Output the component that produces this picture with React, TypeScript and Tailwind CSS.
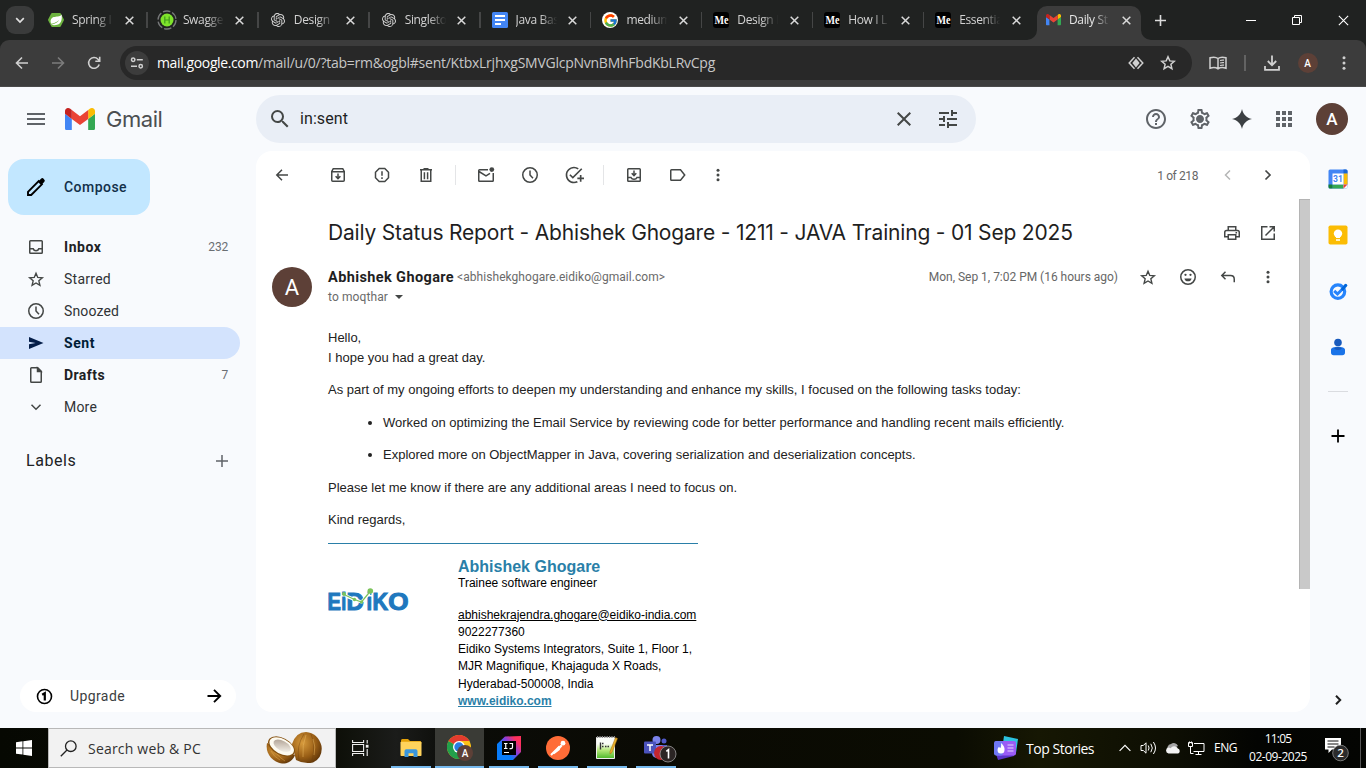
import React from 'react';
import {
  MdAddTask,
  MdApps,
  MdClose,
  MdHelpOutline,
  MdMenu,
  MdOutlineSettings,
  MdSearch,
  MdTune,
} from 'react-icons/md';
import { FcGoogle } from 'react-icons/fc';

type IconProps = { children: React.ReactNode; size?: number; className?: string; box?: string; sw?: number };

function Stroke({ children, size = 20, className = '', box = '0 0 20 20', sw = 1.5 }: IconProps) {
  return (
    <svg
      width={size}
      height={size}
      viewBox={box}
      fill="none"
      stroke="currentColor"
      strokeWidth={sw}
      className={`shrink-0 ${className}`}
    >
      {children}
    </svg>
  );
}

function GmailMark({ className }: { className: string }) {
  return (
    <svg viewBox="52 42 88 66" className={className}>
      <path fill="#4285f4" d="M58 108h14V74L52 59v43c0 3.32 2.69 6 6 6" />
      <path fill="#34a853" d="M120 108h14c3.32 0 6-2.69 6-6V59l-20 15" />
      <path fill="#fbbc04" d="M120 48v26l20-15v-8c0-7.42-8.47-11.65-14.4-7.2" />
      <path fill="#ea4335" d="M72 74V48l24 18 24-18v26L96 92" />
      <path fill="#c5221f" d="M52 51v8l20 15V48l-5.6-4.2c-5.94-4.45-14.4-.22-14.4 7.2" />
    </svg>
  );
}

function OpenAiMark() {
  return (
    <svg width="14" height="14" viewBox="0 0 24 24" fill="#d6d6d6">
      <path d="M22.2819 9.8211a5.9847 5.9847 0 0 0-.5157-4.9108 6.0462 6.0462 0 0 0-6.5098-2.9A6.0651 6.0651 0 0 0 4.9807 4.1818a5.9847 5.9847 0 0 0-3.9977 2.9 6.0462 6.0462 0 0 0 .7427 7.0966 5.98 5.98 0 0 0 .511 4.9107 6.051 6.051 0 0 0 6.5146 2.9001A5.9847 5.9847 0 0 0 13.2599 24a6.0557 6.0557 0 0 0 5.7718-4.2058 5.9894 5.9894 0 0 0 3.9977-2.9001 6.0557 6.0557 0 0 0-.7475-7.0729zm-9.022 12.6081a4.4755 4.4755 0 0 1-2.8764-1.0408l.1419-.0804 4.7783-2.7582a.7948.7948 0 0 0 .3927-.6813v-6.7369l2.02 1.1686a.071.071 0 0 1 .038.052v5.5826a4.504 4.504 0 0 1-4.4945 4.4944zm-9.6607-4.1254a4.4708 4.4708 0 0 1-.5346-3.0137l.142.0852 4.783 2.7582a.7712.7712 0 0 0 .7806 0l5.8428-3.3685v2.3324a.0804.0804 0 0 1-.0332.0615L9.74 19.9502a4.4992 4.4992 0 0 1-6.1408-1.6464zM2.3408 7.8956a4.485 4.485 0 0 1 2.3655-1.9728V11.6a.7664.7664 0 0 0 .3879.6765l5.8144 3.3543-2.0201 1.1685a.0757.0757 0 0 1-.071 0l-4.8303-2.7865A4.504 4.504 0 0 1 2.3408 7.872zm16.5963 3.8558L13.1038 8.364 15.1192 7.2a.0757.0757 0 0 1 .071 0l4.8303 2.7913a4.4944 4.4944 0 0 1-.6765 8.1042v-5.6772a.79.79 0 0 0-.407-.667zm2.0107-3.0231l-.142-.0852-4.7735-2.7818a.7759.7759 0 0 0-.7854 0L9.409 9.2297V6.8974a.0662.0662 0 0 1 .0284-.0615l4.8303-2.7866a4.4992 4.4992 0 0 1 6.6802 4.66zM8.3065 12.863l-2.02-1.1638a.0804.0804 0 0 1-.038-.0567V6.0742a4.4992 4.4992 0 0 1 7.3757-3.4537l-.142.0805L8.704 5.459a.7948.7948 0 0 0-.3927.6813zm1.0976-2.3654l2.602-1.4998 2.6069 1.4998v2.9994l-2.5974 1.4997-2.6067-1.4997Z" />
    </svg>
  );
}

function SpringMark() {
  return (
    <svg width="16" height="16" viewBox="0 0 16 16">
      <path fill="#6db33f" d="M4.2 1h7.6q.7 0 1 .6l3 5.6q.3.7 0 1.4l-3 5.6q-.3.7-1 .7H4.200q-.7 0-1-.7l-3-5.6q-.3-.7 0-1.4l3-5.6q.3-.6 1-.6z" />
      <path fill="#fff" d="M13.6 2.4C14.3 7 13.4 11 10 12.500c-2.500 1-5 .8-7 .3 3.500-.6 6.800-2.200 8.300-5C9.400 10 6.700 11.200 3.300 11.700 1.900 9.500 2.600 6.300 5.600 5.100 8.400 4 11.600 5.200 13.600 2.400z" />
    </svg>
  );
}

function SwaggerMark() {
  return (
    <svg width="20" height="20" viewBox="0 0 20 20">
      <circle cx="10" cy="10" r="9" fill="none" stroke="#77797a" strokeWidth="1.3" strokeDasharray="7.5 2" />
      <circle cx="10" cy="10" r="6.5" fill="#7fe42c" />
      <path d="M7.800 6.500v7M12.200 6.500v7M7.800 10h4.400" stroke="#3f9a1c" strokeWidth="1.2" fill="none" />
    </svg>
  );
}

function DocsMark() {
  return (
    <svg width="16" height="16" viewBox="0 0 16 16">
      <rect width="16" height="16" rx="1.5" fill="#4285f4" />
      <path d="M3 4h10M3 8h10M3 12h6" stroke="#fff" strokeWidth="1.8" />
    </svg>
  );
}

function GoogleMark() {
  return (
    <span className="flex size-4 items-center justify-center rounded-full bg-white">
      <FcGoogle size={15} />
    </span>
  );
}

function MediumMark() {
  return (
    <span className="flex h-4 w-4 items-center rounded-[3px] bg-black pl-px">
      <svg width="15" height="16" viewBox="0 0 15 16" fill="#fff">
        <text x="0.5" y="12" textLength="14" lengthAdjust="spacingAndGlyphs" fontFamily="Liberation Serif" fontWeight="700" fontSize="12">
          Me
        </text>
      </svg>
    </span>
  );
}

function Cross({ size = 9, className = '', sw = 1.5 }: { size?: number; className?: string; sw?: number }) {
  return (
    <Stroke size={size} box="0 0 9 9" sw={sw} className={className}>
      <path d="M.7.7l7.600 7.600M8.300.7L.7 8.300" />
    </Stroke>
  );
}

const tabs = [
  { label: 'Spring I', icon: <SpringMark /> },
  { label: 'Swagge', icon: <SwaggerMark /> },
  { label: 'Design', icon: <OpenAiMark /> },
  { label: 'Singleto', icon: <OpenAiMark /> },
  { label: 'Java Bas', icon: <DocsMark /> },
  { label: 'medium', icon: <GoogleMark /> },
  { label: 'Design I', icon: <MediumMark /> },
  { label: 'How I L', icon: <MediumMark /> },
  { label: 'Essentia', icon: <MediumMark /> },
];

function TabBody({ label, icon, light = false }: { label: string; icon: React.ReactNode; light?: boolean }) {
  return (
    <>
      <span className="flex w-5 shrink-0 items-center justify-center">{icon}</span>
      <span
        className={`ml-[6px] w-[48px] shrink-0 text-[12px] tracking-[-0.35px] whitespace-nowrap [mask-image:linear-gradient(to_right,black_50%,transparent_86%)] ${
          light ? 'text-[#e6e6e6]' : 'text-[#d2d2d2]'
        }`}
      >
        {label}
      </span>
      <Cross size={9} className="ml-[4.5px] text-[#dadada]" />
    </>
  );
}

function TabStrip() {
  return (
    <div className="flex h-10 shrink-0 bg-[#202221] font-['Open_Sans',sans-serif]">
      <div className="flex w-[37px] shrink-0 items-center pl-[6px]">
        <div className="flex size-7 items-center justify-center rounded-[9px] bg-[#3a3b3b] text-[#e0e0e0]">
          <Stroke size={10} box="0 0 10 10" sw={1.7}>
            <path d="M1.200 3.200L5 7l3.800-3.800" />
          </Stroke>
        </div>
      </div>
      {tabs.map((tab, i) => (
        <div key={i} className="flex w-[110.9px] shrink-0 items-center pl-[9px]">
          <TabBody label={tab.label} icon={tab.icon} />
          {i < tabs.length - 1 && <span className="ml-auto h-4 w-[1.5px] bg-[#454646]" />}
        </div>
      ))}
      <div className="flex w-[107px] shrink-0 items-end pl-[2px]">
        <div className="relative flex h-[34px] w-[104px] items-center rounded-t-[10px] bg-[#3c3c3c] pb-[6px] pl-[6px]">
          <TabBody label="Daily St" light icon={<GmailMark className="w-[15px]" />} />
          <svg className="absolute bottom-0 -left-[10px]" width="10" height="10" fill="#3c3c3c">
            <path d="M10 0v10H0A10 10 0 0 0 10 0z" />
          </svg>
          <svg className="absolute -right-[10px] bottom-0" width="10" height="10" fill="#3c3c3c">
            <path d="M0 0v10h10A10 10 0 0 1 0 0z" />
          </svg>
        </div>
      </div>
      <div className="flex flex-1 items-center pl-[13px] text-white">
        <Stroke size={11} box="0 0 11 11" sw={1.6} className="text-[#dcdcdc]">
          <path d="M5.500 0v11M0 5.500h11" />
        </Stroke>
        <Stroke size={10} box="0 0 10 10" sw={1} className="ml-[80px]">
          <path d="M0 5.500h10" />
        </Stroke>
        <Stroke size={10} box="0 0 10 10" sw={1} className="ml-9">
          <path d="M.5 2.500h7v7h-7zM2.500 2.500v-2h7v7h-2" />
        </Stroke>
        <Cross size={11} sw={0.9} className="ml-9" />
      </div>
    </div>
  );
}

function AddressBar() {
  return (
    <div className="flex h-[47px] shrink-0 bg-[#202221]">
      <div className="flex flex-1 items-center rounded-t-[9px] border-b border-[#4a4a4a] bg-[#3c3c3c] text-[#d0d0d0]">
        <Stroke size={14} box="0 0 14 14" sw={1.6} className="ml-[15px]">
          <path d="M13 7H2M7 1.500L1.500 7 7 12.500" />
        </Stroke>
        <Stroke size={14} box="0 0 14 14" sw={1.6} className="ml-[22px] text-[#7c7c7c]">
          <path d="M1 7h11M7 1.500L12.500 7 7 12.500" />
        </Stroke>
        <Stroke size={14} box="0 0 14 14" sw={1.6} className="ml-[22px]">
          <path d="M12.200 8.500A5.400 5.400 0 1 1 11 3.200l1.500 1.500M12.700.8v4.400H8.300" />
        </Stroke>
        <div className="ml-[19px] flex h-[34px] w-[1072px] items-center rounded-full bg-[#282828]">
          <div className="ml-[5px] flex size-6 items-center justify-center rounded-full bg-[#3c3c3c]">
            <Stroke size={14} box="0 0 14 14" sw={1.5}>
              <circle cx="3.200" cy="3.800" r="1.700" />
              <path d="M6.800 3.800h6M1 10.200h6" />
              <circle cx="10.700" cy="10.200" r="1.700" />
            </Stroke>
          </div>
          <div className="ml-[8px] font-['Open_Sans',sans-serif] text-[14px] leading-5 whitespace-nowrap text-[#c7c7c7]">
            <span className="tracking-[-0.38px] text-white">mail.google.com</span>
            <span className="tracking-[-0.25px]">/mail/u/0/?tab=rm&amp;ogbl#sent/KtbxLrjhxgSMVGlcpNvnBMhFbdKbLRvCpg</span>
          </div>
          <svg width="16" height="14" viewBox="0 0 16 14" className="ml-auto text-[#cfcfcf]" fill="none" stroke="currentColor" strokeWidth="1.5">
            <path d="M6.500 1.200L1.200 7l5.300 5.800M9.500 1.200L14.800 7l-5.300 5.800" />
            <path d="M8 2.600L11.600 7 8 11.400 4.400 7z" fill="currentColor" stroke="none" />
          </svg>
          <Stroke size={16} box="0 0 16 16" sw={1.5} className="mr-[16px] ml-[16px]">
            <path d="M8 1.800l1.800 4.100 4.500.4-3.400 3 1 4.300L8 11.300l-3.900 2.300 1-4.300-3.400-3 4.500-.4z" />
          </Stroke>
        </div>
        <Stroke size={18} box="0 0 18 18" sw={1.5} className="ml-[17px]">
          <path d="M9 4.500C7 3 3.500 3 1 3.800v10.400c2.500-.8 6-.8 8 .6 2-1.400 5.500-1.400 8-.6V3.800C14.500 3 11 3 9 4.500zv10" />
          <path d="M11 6.500q2-.6 4-.3M11 9q2-.6 4-.3M11 11.500q2-.6 4-.3" strokeWidth="1.2" />
        </Stroke>
        <span className="ml-[17px] h-4 w-[1.5px] bg-[#636363]" />
        <Stroke size={16} box="0 0 16 16" sw={1.8} className="ml-[18px]">
          <path d="M8 .5v9.500M3.800 6L8 10.200 12.200 6M1 11v3.800h14V11" />
        </Stroke>
        <span className="ml-[18px] flex size-5 items-center justify-center rounded-full bg-[#5d4037] font-['Roboto',sans-serif] text-[10px] font-medium text-white">
          A
        </span>
        <svg width="4" height="14" viewBox="0 0 4 14" fill="#d0d0d0" className="ml-[24px]">
          <circle cx="2" cy="1.8" r="1.5" />
          <circle cx="2" cy="7" r="1.5" />
          <circle cx="2" cy="12.2" r="1.5" />
        </svg>
      </div>
    </div>
  );
}

function Dots({ className = '' }: { className?: string }) {
  return (
    <svg width="20" height="20" viewBox="0 0 20 20" fill="currentColor" className={className}>
      <circle cx="10" cy="5.2" r="1.5" />
      <circle cx="10" cy="10" r="1.5" />
      <circle cx="10" cy="14.8" r="1.5" />
    </svg>
  );
}

const clock = (
  <Stroke>
    <circle cx="10" cy="10" r="7.25" />
    <path d="M10 5.500V10l3 3.200" />
  </Stroke>
);

const star = (
  <Stroke sw={1.4}>
    <path d="M10 4.300l1.750 4.100 4.600.4-3.500 3 1.060 4.500L10 13.950l-3.910 2.350 1.060-4.500-3.500-3 4.600-.4z" />
  </Stroke>
);

const folders = [
  {
    label: 'Inbox',
    count: '232',
    style: 'font-bold tracking-[0.56px]',
    icon: (
      <Stroke>
        <rect x="3.75" y="3.75" width="12.5" height="12.5" rx="0.8" />
        <path d="M4 11.750h3.200c.4 1.300 1.500 2 2.800 2s2.400-.7 2.800-2H16" />
      </Stroke>
    ),
  },
  { label: 'Starred', style: 'tracking-[0.26px] text-[#303235]', icon: star },
  { label: 'Snoozed', style: 'tracking-[0.13px] text-[#303235]', icon: clock },
  {
    label: 'Sent',
    style: 'font-bold tracking-[0.56px] text-[#001d35]',
    active: true,
    icon: (
      <svg width="20" height="20" viewBox="0 0 20 20" fill="#041e49">
        <path d="M3 4l14.500 6L3 16v-4.700L9.500 10 3 8.700z" />
      </svg>
    ),
  },
  {
    label: 'Drafts',
    count: '7',
    style: 'font-bold tracking-[0.43px]',
    icon: (
      <Stroke>
        <path d="M4.750 3.500a.75.75 0 0 1 .75-.75h6.200l3.550 3.550v10.200a.75.75 0 0 1-.75.75h-9a.75.75 0 0 1-.75-.75z" />
        <path d="M11.500 3v3.500H15z" fill="currentColor" />
      </Stroke>
    ),
  },
  {
    label: 'More',
    style: 'tracking-[0.19px] text-[#303235]',
    icon: (
      <Stroke>
        <path d="M5.500 7.800l4.500 4.500 4.500-4.500" />
      </Stroke>
    ),
  },
];

function Sidebar() {
  return (
    <div className="flex w-64 shrink-0 flex-col pt-2 pb-4 text-[#202124]">
      <button className="ml-2 flex h-14 w-[142px] items-center rounded-2xl bg-[#c2e7ff] pl-[18px] text-[14px] font-medium tracking-[0.46px] text-[#12304a]">
        <svg width="20" height="20" viewBox="0 0 20 20">
          <path fill="none" stroke="#000" strokeWidth="1.9" d="M2 18v-3.200L12.700 4.100l3.200 3.200L5.200 18z" />
          <path d="M12 4.800l3-3a1.800 1.800 0 0 1 2.600 0l.6.600a1.800 1.800 0 0 1 0 2.600l-3 3z" />
        </svg>
        <span className="ml-[18px]">Compose</span>
      </button>
      <nav className="mt-4 flex flex-col">
        {folders.map((f) => (
          <div
            key={f.label}
            className={`flex h-8 w-60 items-center rounded-r-full pr-3 pl-[26px] text-[14px] ${f.active ? 'bg-[#d3e3fd]' : ''}`}
          >
            <span className="text-[#444746]">{f.icon}</span>
            <span className={`ml-[18px] ${f.style}`}>{f.label}</span>
            <span className="ml-auto text-[12px] tracking-[-0.2px] text-[#6a6e73]">{f.count}</span>
          </div>
        ))}
      </nav>
      <div className="mt-[10px] flex h-14 w-60 items-center justify-between pr-[11px] pl-[26px] text-[16px]">
        <span className="tracking-[0.55px]">Labels</span>
        <Stroke size={14} box="0 0 14 14" sw={1.5} className="text-[#5f6368]">
          <path d="M7 1v12M1 7h12" />
        </Stroke>
      </div>
      <div className="mt-auto ml-5 flex h-8 w-[216px] items-center rounded-full bg-white pr-[14px] pl-4 text-[14px] tracking-[0.4px] text-[#3c3e41]">
        <Stroke size={17} box="0 0 17 17" sw={1.6} className="text-black">
          <circle cx="8.5" cy="8.5" r="7" />
          <path d="M6.200 6.800l2.600-1.600v7.300" strokeWidth="2.2" />
        </Stroke>
        <span className="ml-[17px]">Upgrade</span>
        <Stroke size={16} box="0 0 16 16" sw={1.9} className="ml-auto text-black">
          <path d="M1.500 8h12.500M8 1.800L14.200 8 8 14.200" />
        </Stroke>
      </div>
    </div>
  );
}

function GmailHeader() {
  return (
    <div className="flex h-16 shrink-0 items-center text-[#5f6368]">
      <div className="flex w-64 shrink-0 items-center pl-6">
        <MdMenu size={24} />
        <GmailMark className="ml-[17px] w-[30px]" />
        <span className="ml-[11px] font-['Inter',sans-serif] text-[22px] leading-8 tracking-[-0.45px] text-[#4c4f51]">Gmail</span>
      </div>
      <div className="flex h-12 w-[720px] shrink-0 items-center rounded-full bg-[#e9eef6] pr-4 pl-3 text-[#444746]">
        <MdSearch size={24} />
        <span className="ml-2 text-[16px] tracking-[0.08px] text-[#1f1f1f]">in:sent</span>
        <MdClose size={24} className="ml-auto" />
        <MdTune size={24} className="ml-5" />
      </div>
      <div className="ml-auto flex items-center pr-[18px]">
        <MdHelpOutline size={24} />
        <svg width="24" height="24" viewBox="0 0 24 24" className="ml-5">
          <MdOutlineSettings size={24} />
          <circle cx="12" cy="12" r="3" fill="currentColor" />
        </svg>
        <svg width="20" height="20" viewBox="0 0 20 20" fill="#3c4043" className="ml-5">
          <path d="M10 0C11.200 5.500 14.500 8.800 20 10 14.500 11.200 11.200 14.500 10 20 8.800 14.500 5.500 11.200 0 10 5.500 8.800 8.800 5.500 10 0z" />
        </svg>
        <MdApps size={24} className="ml-5" />
        <span className="ml-5 flex size-8 items-center justify-center rounded-full bg-[#5d4037] pt-px text-[17px] font-medium text-white">A</span>
      </div>
    </div>
  );
}

function Cell({ children, className = 'w-11' }: { children: React.ReactNode; className?: string }) {
  return <div className={`flex shrink-0 justify-center ${className}`}>{children}</div>;
}

function MailToolbar() {
  return (
    <div className="flex h-12 shrink-0 items-center text-[#444746]">
      <Cell className="w-[52px]">
        <Stroke>
          <path d="M16 10H5M10 4.800L4.800 10l5.200 5.200" />
        </Stroke>
      </Cell>
      <Cell className="ml-2 w-11">
        <Stroke>
          <path d="M3.750 6.500v8.800a1 1 0 0 0 1 1h10.500a1 1 0 0 0 1-1V6.500l-1.500-2.750h-9.500zM4 6.750h12M10 8.500v5M7.600 11.200L10 13.600l2.400-2.400" />
        </Stroke>
      </Cell>
      <Cell>
        <Stroke>
          <path d="M7.200 3.500h5.600l3.700 3.700v5.600l-3.700 3.700H7.200l-3.700-3.700V7.200zM10 6.300v4.500M10 12.300v1.600" />
        </Stroke>
      </Cell>
      <Cell>
        <Stroke>
          <path d="M5.250 5.500v10.750h9.500V5.500M4 4.750h12M7.500 3.700h5M8.400 7.200v7M11.600 7.200v7" />
        </Stroke>
      </Cell>
      <span className="ml-[7px] h-5 w-px bg-[#e4e5e7]" />
      <Cell className="ml-2 w-11">
        <Stroke>
          <path d="M12 4.750H3.500a.75.75 0 0 0-.75.750v10c0 .4.300.750.750.750h13c.4 0 .75-.3.750-.75V8M3 6.500l7 4.300 4-2.500" />
          <circle cx="15.8" cy="4.6" r="2.4" fill="currentColor" stroke="none" />
        </Stroke>
      </Cell>
      <Cell>{clock}</Cell>
      <Cell>
        <MdAddTask size={20} />
      </Cell>
      <span className="ml-[7px] h-5 w-px bg-[#e4e5e7]" />
      <Cell className="ml-2 w-11">
        <Stroke>
          <rect x="3.75" y="3.75" width="12.5" height="12.5" rx="0.8" />
          <path d="M4 12.500h3c.5 1.200 1.600 1.800 3 1.800s2.500-.6 3-1.800h3M10 5.500v5M7.700 8.300L10 10.600l2.300-2.300" />
        </Stroke>
      </Cell>
      <Cell>
        <Stroke>
          <path d="M2.750 5.500c0-.4.300-.75.750-.75h9L16.700 10l-4.200 5.250h-9a.75.75 0 0 1-.75-.75z" />
        </Stroke>
      </Cell>
      <Cell className="w-9">
        <Dots />
      </Cell>
      <span className="ml-auto pt-[2px] text-[12px] tracking-[-0.4px] text-[#666]">1 of 218</span>
      <Stroke className="ml-5 text-[#b5b6b6]">
        <path d="M12 5.500L7.500 10l4.500 4.500" />
      </Stroke>
      <Stroke className="mr-8 ml-5" sw={1.7}>
        <path d="M7.500 5.500L12 10l-4.500 4.500" />
      </Stroke>
    </div>
  );
}

const logoLetters = [
  { ch: 'E', x: -0.6, w: 13.4 },
  { ch: 'i', x: 13.2, w: 5 },
  { ch: 'D', x: 18.6, w: 17.4 },
  { ch: 'i', x: 38.5, w: 5.6 },
  { ch: 'K', x: 44.4, w: 15.6 },
  { ch: 'O', x: 60.2, w: 20.3 },
];

function EidikoLogo() {
  return (
    <svg width="81" height="26" viewBox="0 0 81 26">
      {logoLetters.map((l, i) => (
        <text
          key={i}
          x={l.x}
          y="22.500"
          textLength={l.w}
          lengthAdjust="spacingAndGlyphs"
          fontFamily="Liberation Sans"
          fontWeight="700"
          fontSize="24"
          fill="#1f78be"
          stroke="#1f78be"
          strokeWidth="1.1"
        >
          {l.ch}
        </text>
      ))}
      <path d="M18 9l8.500 3.500 7 2.500 8-9" fill="none" stroke="#fff" strokeWidth="3" />
      <path d="M17 8l9.500 4.500 7 2.500 9-11" fill="none" stroke="#7cc35b" strokeWidth="1.2" />
      <g fill="#7cc35b">
        <circle cx="16" cy="7" r="1.9" />
        <circle cx="26.5" cy="12.5" r="1.7" />
        <circle cx="33.5" cy="15" r="1.7" />
        <circle cx="42.3" cy="4" r="2.8" />
      </g>
    </svg>
  );
}

function MailBody() {
  return (
    <div className="pt-[21px] pl-[72px] font-['Liberation_Sans',Arial,sans-serif] text-[13px] leading-[19.5px] text-[#222]">
      <p>Hello,</p>
      <p>I hope you had a great day.</p>
      <p className="mt-[13px]">
        As part of my ongoing efforts to deepen my understanding and enhance my skills, I focused on the following tasks today:
      </p>
      <ul className="pl-10">
        {[
          'Worked on optimizing the Email Service by reviewing code for better performance and handling recent mails efficiently.',
          'Explored more on ObjectMapper in Java, covering serialization and deserialization concepts.',
        ].map((t) => (
          <li key={t} className="mt-[13px] flex items-center">
            <span className="mt-px mr-[11px] size-1 rounded-full bg-[#222]" />
            {t}
          </li>
        ))}
      </ul>
      <p className="mt-[13px]">Please let me know if there are any additional areas I need to focus on.</p>
      <p className="mt-[13px]">Kind regards,</p>
      <div className="mt-[13.5px] flex w-[370px] border-t border-[#2a7fa8] pt-[14px] text-[12px] leading-[17.25px] text-black">
        <div className="w-[130px] pt-[29px]">
          <EidikoLogo />
        </div>
        <div className="whitespace-nowrap">
          <p className="text-[16px] leading-[18px] font-bold text-[#2a7fa8]">Abhishek Ghogare</p>
          <p className="-mt-px leading-4">Trainee software engineer</p>
          <p className="mt-[15.6px] underline">abhishekrajendra.ghogare@eidiko-india.com</p>
          <p>9022277360</p>
          <p>Eidiko Systems Integrators, Suite 1, Floor 1,</p>
          <p>MJR Magnifique, Khajaguda X Roads,</p>
          <p>Hyderabad-500008, India</p>
          <p className="font-bold text-[#2a7fa8] underline">www.eidiko.com</p>
        </div>
      </div>
    </div>
  );
}

function MailPanel() {
  return (
    <div className="flex h-[561px] w-[1054px] shrink-0 flex-col overflow-hidden rounded-2xl bg-white">
      <MailToolbar />
      <div className="flex min-h-0 flex-1">
        <div className="w-[1043px] shrink-0 overflow-hidden text-[#444746]">
          <div className="flex h-[68px] items-center pr-[13px]">
            <h1 className="flex-1 pl-[72px] font-['Inter',sans-serif] text-[21px] tracking-[-0.187px] whitespace-nowrap text-[#1f1f1f]">
              Daily Status Report - Abhishek Ghogare - 1211 - JAVA Training - 01 Sep 2025
            </h1>
            <Cell className="w-9">
              <Stroke>
                <path d="M6.250 7.500V3.750h7.500V7.500M6 13.750H2.750v-4.500c0-1 .7-1.750 1.750-1.750h11c1 0 1.750.75 1.750 1.750v4.500H14" />
                <path d="M6.250 11.750h7.500v4.500h-7.500zM13.500 9.750h1.600" />
              </Stroke>
            </Cell>
            <Cell className="w-9">
              <Stroke>
                <path d="M9.500 3.750H3.750v12.500h12.500V10.500M11.500 3.750h4.750V8.500M16 4l-8.500 8.500" />
              </Stroke>
            </Cell>
          </div>
          <div className="flex h-10 pr-[11px] pl-4">
            <div className="flex size-10 items-center justify-center rounded-full bg-[#5d4037] pt-px text-[22px] text-white">A</div>
            <div className="ml-4 flex-1">
              <div className="flex h-5 items-center">
                <span className="pt-px text-[14.5px] font-bold tracking-[0.39px] text-[#1f1f1f]">Abhishek Ghogare</span>
                <span className="ml-[3px] text-[12px] tracking-[0.05px] text-[#6a6a6a]">&lt;abhishekghogare.eidiko@gmail.com&gt;</span>
                <span className="mr-[10px] ml-auto text-[12px] tracking-[-0.02px] text-[#666]">Mon, Sep 1, 7:02 PM (16 hours ago)</span>
                <Cell className="w-10">{star}</Cell>
                <Cell className="w-10">
                  <Stroke>
                    <circle cx="10" cy="10" r="7.25" />
                    <path d="M6.400 11.500h7.200a3.700 3.700 0 0 1-7.200 0z" fill="currentColor" stroke="none" />
                    <circle cx="7.5" cy="7.8" r="1.15" fill="currentColor" stroke="none" />
                    <circle cx="12.5" cy="7.8" r="1.15" fill="currentColor" stroke="none" />
                  </Stroke>
                </Cell>
                <Cell className="w-10">
                  <Stroke>
                    <path d="M7.500 4.800L3.800 8.500l3.700 3.700M4 8.500h8.500c2.400 0 3.750 1.400 3.750 3.700v3" />
                  </Stroke>
                </Cell>
                <Cell className="w-10">
                  <Dots />
                </Cell>
              </div>
              <div className="flex h-5 items-center text-[12px] tracking-[0.1px] text-[#6a6a6a]">
                to moqthar
                <svg width="8" height="4" viewBox="0 0 8 4" fill="#444746" className="ml-[7px]">
                  <path d="M0 0h8L4 4z" />
                </svg>
              </div>
            </div>
          </div>
          <MailBody />
        </div>
        <div className="w-[11px]">
          <div className="h-[390px] border-t border-l border-[#b4b4b4] bg-[#c9c9c9]" />
        </div>
      </div>
    </div>
  );
}

function SidePanel() {
  return (
    <div className="flex flex-1 flex-col items-center pt-[18px]">
      <svg width="20" height="20" viewBox="0 0 20 20">
        <rect x="0.5" y="0.5" width="19" height="19" rx="1.5" fill="#4285f4" />
        <path d="M15.500.5H18A1.500 1.500 0 0 1 19.500 2v2.500h-4z" fill="#1967d2" />
        <path d="M15.500 4.500h4v11h-4z" fill="#fbbc04" />
        <path d="M4.500 15.500h11v4h-11z" fill="#34a853" />
        <path d="M.5 15.500h4v4H2A1.500 1.500 0 0 1 .5 18z" fill="#188038" />
        <path d="M15.500 15.500h4v4h-4z" fill="#f8fafd" />
        <path d="M15.500 15.500h4l-4 4z" fill="#ea4335" />
        <path d="M4.500 4.500h11v11h-11z" fill="#fff" />
        <text x="10" y="13.2" textAnchor="middle" fontFamily="Roboto" fontWeight="700" fontSize="8.5" fill="#4285f4">
          31
        </text>
      </svg>
      <svg width="20" height="20" viewBox="0 0 20 20" className="mt-9">
        <rect x="0.5" y="0.5" width="19" height="19" rx="1.8" fill="#fbbc04" />
        <circle cx="10" cy="8.6" r="4.2" fill="#fff" />
        <path d="M8 11h4v2H8zM8 14.200h4v1.600H8z" fill="#fff" />
      </svg>
      <svg width="20" height="20" viewBox="0 0 20 20" className="mt-9">
        <circle cx="9.9" cy="10.6" r="6.8" fill="none" stroke="#2684fc" strokeWidth="3.2" />
        <path d="M6.200 9.800l3.300 3.200 5-5" fill="none" stroke="#2684fc" strokeWidth="3" />
        <path d="M12.600 8l4-4.600 2.200 2-4 4.600z" fill="#0066da" />
        <circle cx="17.7" cy="4.2" r="1.5" fill="#0066da" />
      </svg>
      <svg width="20" height="20" viewBox="0 0 20 20" className="mt-9">
        <path d="M3 12.800c0-1.800 3-3 7-3s7 1.200 7 3v2.700c0 1.700-1 2.700-2.700 2.700H5.700c-1.700 0-2.700-1-2.700-2.700z" fill="#1a73e8" />
        <circle cx="10" cy="5.5" r="3.8" fill="#185abc" />
        <path d="M6 11.500q4 3 8 0-1.500-1.600-4-1.600t-4 1.600z" fill="#185abc" />
      </svg>
      <span className="mt-[34px] h-px w-5 bg-[#dadce0]" />
      <Stroke className="mt-[34px] text-black" sw={1.8}>
        <path d="M10 3.500v13M3.500 10h13" />
      </Stroke>
      <Stroke className="mt-auto mb-[18px] text-[#1f1f1f]" sw={2}>
        <path d="M8 5.800l4.200 4.200L8 14.200" />
      </Stroke>
    </div>
  );
}

function Coconuts() {
  return (
    <svg width="58" height="34" viewBox="0 0 58 34">
      <defs>
        <radialGradient id="nut" cx="0.35" cy="0.35" r="0.75">
          <stop offset="0" stopColor="#d79a3c" />
          <stop offset="0.6" stopColor="#9a5f16" />
          <stop offset="1" stopColor="#5d3408" />
        </radialGradient>
        <linearGradient id="meat" x1="0" y1="0" x2="1" y2="1">
          <stop offset="0" stopColor="#a8988a" />
          <stop offset="1" stopColor="#fffdf6" />
        </linearGradient>
      </defs>
      <path d="M26 13Q30 1 40 1 52 2 55.500 15 57 27 47 31.500 38 33.500 30 29z" fill="url(#nut)" />
      <path d="M38 3q-8 12-5 26M45 3q5 12 1 27" stroke="#6b3f0d" strokeWidth="0.8" fill="none" opacity="0.5" />
      <path d="M40 4q-4 10-3 22M47 8q3 8 1 16" stroke="#e9b963" strokeWidth="0.8" fill="none" opacity="0.6" />
      <path d="M1 12C-1 22 6 31 16 32.500c6 .3 11-3 13-8.500z" fill="url(#nut)" />
      <path d="M5 20q3 6 9 9M10 22q4 5 9 8" stroke="#e0a850" strokeWidth="0.8" fill="none" opacity="0.6" />
      <ellipse cx="15.5" cy="15.5" rx="14.5" ry="8.5" transform="rotate(28 15.5 15.5)" fill="#84500f" />
      <ellipse cx="15.7" cy="15.3" rx="13.3" ry="7.5" transform="rotate(28 15.7 15.3)" fill="#fdfaf0" />
      <ellipse cx="16.2" cy="14.8" rx="9.5" ry="4.9" transform="rotate(28 16.2 14.8)" fill="url(#meat)" />
    </svg>
  );
}

function TaskApp({ children, open = true, active = false }: { children: React.ReactNode; open?: boolean; active?: boolean }) {
  return (
    <div className={`flex h-10 w-[49px] shrink-0 flex-col items-center ${active ? 'bg-[#3a3b36]' : ''}`}>
      <div className="flex flex-1 items-center pt-[2px]">{children}</div>
      {open && <span className={`h-[2px] bg-[#76b9ed] ${active ? 'w-full' : 'w-10'}`} />}
    </div>
  );
}

function Taskbar() {
  return (
    <div className="flex h-10 shrink-0 items-center bg-[linear-gradient(90deg,#060802_0%,#0b0d05_24%,#1b1c1a_29%,#0b0c08_33%,#0a0a03_50%,#0b0c02_70%,#161703_76%,#0d0e03_86%,#030402_92%,#040502_100%)] font-['Open_Sans',sans-serif] text-white">
      <div className="flex w-12 justify-center">
        <svg width="16" height="16" viewBox="0 0 16 16" fill="#fff">
          <path d="M0 2.200L6.500 1.300v6.200H0zM7.300 1.200L16 0v7.500H7.300zM0 8.400h6.500v6.200L0 13.700zM7.300 8.400H16V16l-8.700-1.200z" />
        </svg>
      </div>
      <div className="flex h-10 w-72 items-center border border-[#b8b8b8] bg-[#f2f2f2] pl-[11px]">
        <Stroke size={17} box="0 0 17 17" sw={1.3} className="text-[#222]">
          <circle cx="10.8" cy="6.2" r="5.3" />
          <path d="M7 10L.8 16.200" />
        </Stroke>
        <span className="ml-[11px] text-[14px] tracking-[0.2px] whitespace-nowrap text-[#333]">Search web &amp; PC</span>
        <span className="ml-auto pr-[11px]">
          <Coconuts />
        </span>
      </div>
      <TaskApp open={false}>
        <svg width="17" height="16" viewBox="0 0 17 16" fill="none" stroke="#f0f0f0" className="mb-[2px]" strokeWidth="1.1">
          <path d="M.6 0v2.500h11V0M.6 16v-2.500h11V16M.6 4.500h11v7H.6zM15.200 0v3.500M15.200 9v7" />
          <path d="M13.800 4.800h2.700v2.900h-2.700z" fill="#f0f0f0" stroke="none" />
        </svg>
      </TaskApp>
      <div className="w-px" />
      <TaskApp>
        <svg width="22" height="18" viewBox="0 0 22 18">
          <path d="M1 1.500Q1 0 2.200 0H8l2 2h10q1.200 0 1.200 1.200V5H1z" fill="#e3a008" />
          <rect x="0.5" y="2.8" width="21" height="14.2" rx="0.8" fill="#ffd35c" />
          <path d="M4.500 18v-6q0-1.800 1.800-1.800h9.400q1.800 0 1.800 1.800v6h-4v-3.800h-5V18z" fill="#3a96dd" />
        </svg>
      </TaskApp>
      <TaskApp active>
        <svg width="26" height="26" viewBox="0 0 26 26" className="ml-px">
          <circle cx="12" cy="12" r="12" fill="#fbc116" />
          <path d="M12 12L1.600 6A12 12 0 0 0 12 24l5.500-9z" fill="#22a04b" />
          <path d="M12 12L1.600 6A12 12 0 0 1 22.400 6H12z" fill="#e33b2e" />
          <circle cx="12" cy="12" r="6" fill="#fff" />
          <circle cx="12" cy="12" r="4.7" fill="#2a7de1" />
          <circle cx="18" cy="18" r="8" fill="#5d4037" />
          <text x="18" y="21.5" textAnchor="middle" fontFamily="Roboto" fontWeight="500" fontSize="10" fill="#fff">
            A
          </text>
        </svg>
      </TaskApp>
      <TaskApp>
        <svg width="24" height="24" viewBox="0 0 24 24">
          <defs>
            <linearGradient id="ij" x1="0" y1="0.9" x2="1" y2="0.1">
              <stop offset="0.35" stopColor="#087cfa" />
              <stop offset="0.6" stopColor="#8a3ddb" />
              <stop offset="0.85" stopColor="#fe315d" />
            </linearGradient>
          </defs>
          <path d="M0 8l8-7.500L24 0v16l-8 8H0z" fill="url(#ij)" />
          <rect x="5" y="5" width="14" height="14" fill="#000" />
          <path d="M7 7.500h3.500M8.750 7.500v5M7 12.500h3.500M12.500 7.500h3v3.800q0 1.300-1.300 1.300h-1.700M7 16.500h5" stroke="#fff" strokeWidth="1.2" fill="none" />
        </svg>
      </TaskApp>
      <TaskApp>
        <svg width="24" height="24" viewBox="0 0 24 24">
          <circle cx="12" cy="12" r="12" fill="#ff6c37" />
          <path d="M5 19l8.500-8.500M7.500 17.500l6-4.500" stroke="#fff" strokeWidth="2" />
          <path d="M11 12l4-3.500 1.500 1.500-3.500 4z" fill="#fff" />
          <circle cx="17" cy="7.2" r="2.4" fill="#fff" />
        </svg>
      </TaskApp>
      <TaskApp>
        <svg width="24" height="26" viewBox="0 0 24 26">
          <defs>
            <linearGradient id="np" x1="0" y1="0" x2="0" y2="1">
              <stop offset="0.3" stopColor="#fafdf8" />
              <stop offset="0.6" stopColor="#b5e87a" />
              <stop offset="1" stopColor="#4cb82a" />
            </linearGradient>
          </defs>
          <path d="M1.500 2.500h18v21h-18z" fill="url(#np)" stroke="#eee" />
          <path d="M2 2h18" stroke="#8a8a8a" strokeWidth="2" strokeDasharray="1.2 1.2" />
          <path d="M5.500 7.500v7M7 8.500h1.500M7 11.500h1.500M10 11.500h1.500M12.500 11.500h1.500" stroke="#333" strokeWidth="1.4" />
          <path d="M20.500 2.500l2 1-5.500 14-2 1.500v-2.500z" fill="#e8b02c" stroke="#a06a10" strokeWidth="0.5" />
        </svg>
      </TaskApp>
      <TaskApp>
        <svg width="34" height="28" viewBox="0 0 34 28" className="mt-[2px] ml-[8px]">
          <circle cx="13.5" cy="5" r="4" fill="#7b83eb" />
          <circle cx="21" cy="6" r="2.5" fill="#5059c9" />
          <path d="M9 10h10q2 0 2 2v6q0 5-6 5t-6-5z" fill="#7b83eb" />
          <path d="M20 10h4v6h-4z" fill="#5059c9" />
          <rect x="1" y="6.5" width="12" height="12" rx="1" fill="#4b53bc" />
          <path d="M4 10h6M7 10v6" stroke="#fff" strokeWidth="1.5" />
          <circle cx="18" cy="18" r="7" fill="#c4262e" />
          <circle cx="25" cy="19" r="8" fill="#2b2524" stroke="#9a9a9a" strokeWidth="0.8" />
          <path d="M23.300 16.400l2.200-1.700v8.800" stroke="#fff" strokeWidth="1.6" fill="none" />
        </svg>
      </TaskApp>
      <svg width="24" height="24" viewBox="0 0 24 24" className="ml-auto">
        <path d="M10 0l14 3-2 14-14-3z" fill="#2cc3e0" />
        <path d="M2 18l18-2v4L4 24z" fill="#5b34c9" />
        <rect x="1" y="5" width="21" height="14.5" rx="2" fill="#9a5cf5" />
        <rect x="0" y="5" width="9" height="14.5" rx="2" fill="#6f78f5" />
        <path d="M7 7q4 3.500 3.500 7a3.500 3.500 0 0 1-7 0Q3.500 12 5 10.800q.8 1.200 1.500 1.200Q7.500 10 7 7z" fill="#fff" />
        <path d="M13.500 9h6M13.500 12h6M13.500 15h6" stroke="#e5d4ff" strokeWidth="1.2" />
      </svg>
      <span className="ml-2 w-[92px] text-[14px] tracking-[-0.47px] whitespace-nowrap">Top Stories</span>
      <Stroke size={12} box="0 0 12 12" sw={1.2} className="ml-px">
        <path d="M.6 8.800L6 3.400l5.400 5.400" />
      </Stroke>
      <svg width="18" height="16" viewBox="0 0 18 16" fill="none" stroke="#fff" strokeWidth="1" className="ml-[9px]">
        <path d="M1 5.500h2.300L6 2.800v10.400l-2.700-2.700H1zM8.300 5.500q1.500 2.500 0 5M10.800 3.800q3 4.200 0 8.400M13.400 2q4.200 6 0 12" />
      </svg>
      <svg width="17" height="12" viewBox="0 0 17 12" className="ml-[7px]">
        <path d="M3 9A4.500 4.500 0 0 1 6 2a4.500 4.500 0 0 1 7 2z" fill="#a5a5a5" />
        <path d="M3.500 11.500A3 3 0 0 1 3.500 5.600q1 0 2 .6 2.500-3 6-1.200 1 .7 1.300 1.600a2.600 2.600 0 0 1 .4 4.900z" fill="#f3f3f3" />
      </svg>
      <svg width="17" height="15" viewBox="0 0 17 15" fill="none" stroke="#fff" strokeWidth="1" className="ml-[6px]">
        <path d="M6 2.500h10v8H5.500M10.500 10.500v3M7.500 13.500h6M.5 1.500h4v4h-4zM2.500 5.500v7h3M1.500.5v2M3.500.5v2" />
      </svg>
      <span className="ml-[9px] w-[24px] text-[12px] tracking-[-0.48px]">ENG</span>
      <div className="ml-[10px] flex w-[60px] flex-col items-center text-[12px] leading-[18px]">
        <span className="tracking-[-0.8px]">11:05</span>
        <span className="tracking-[-0.46px]">02-09-2025</span>
      </div>
      <svg width="26" height="26" viewBox="0 0 26 26" className="mt-1 ml-[16px]">
        <path d="M1 1h16v11.500h-9L4.500 16v-3.500H1z" fill="#fff" />
        <path d="M3.500 4h11M3.500 7h11M3.500 10h7" stroke="#111" strokeWidth="1" />
        <circle cx="16.5" cy="16" r="7.8" fill="#2b2b2b" stroke="#8f8f8f" strokeWidth="0.8" />
        <text x="16.5" y="20" textAnchor="middle" fontFamily="Open Sans" fontWeight="600" fontSize="11.5" fill="#fff">
          2
        </text>
      </svg>
      <span className="mr-[5px] ml-[10px] h-10 w-px bg-[#555]" />
    </div>
  );
}

export default function App() {
  return (
    <div className="flex h-[768px] w-[1366px] flex-col overflow-hidden bg-[#202221]">
      <TabStrip />
      <AddressBar />
      <div className="flex min-h-0 flex-1 flex-col bg-[#f8fafd] font-['Roboto',sans-serif]">
        <GmailHeader />
        <div className="flex min-h-0 flex-1">
          <Sidebar />
          <MailPanel />
          <SidePanel />
        </div>
      </div>
      <Taskbar />
    </div>
  );
}
